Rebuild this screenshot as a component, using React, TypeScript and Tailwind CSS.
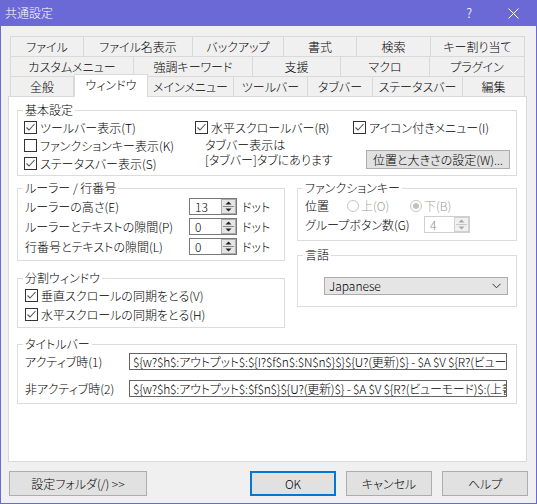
import React from 'react'

type TabDef = { label: string; w: string; active?: boolean }

const ROW1: TabDef[] = [
  { label: 'ファイル', w: 'w-[74px] border-l' },
  { label: 'ファイル名表示', w: 'w-[109px]' },
  { label: 'バックアップ', w: 'w-[91px]' },
  { label: '書式', w: 'w-[73px]' },
  { label: '検索', w: 'w-[74px]' },
  { label: 'キー割り当て', w: 'w-[94px]' },
]
const ROW2: TabDef[] = [
  { label: 'カスタムメニュー', w: 'w-[124px] border-l' },
  { label: '強調キーワード', w: 'w-[119px]' },
  { label: '支援', w: 'w-[88px]' },
  { label: 'マクロ', w: 'w-[89px]' },
  { label: 'プラグイン', w: 'w-[95px]' },
]
const ROW3: TabDef[] = [
  { label: '全般', w: 'w-[64px] border-l' },
  { label: 'ウィンドウ', w: 'w-[74px]', active: true },
  { label: 'メインメニュー', w: 'w-[86px]' },
  { label: 'ツールバー', w: 'w-[74px]' },
  { label: 'タブバー', w: 'w-[65px]' },
  { label: 'ステータスバー', w: 'w-[90px]' },
  { label: '編集', w: 'w-[62px]' },
]

function TabRow({ tabs }: { tabs: TabDef[] }) {
  return (
    <div className="flex h-[20px]">
      {tabs.map(t =>
        t.active ? (
          <div key={t.label}
            className={`${t.w} relative z-10 -mt-[2px] h-[23px] bg-white border-t border-l border-r border-[#d9d9d9] flex items-start justify-center pt-[2px] leading-[16px]`}>
            {t.label}
          </div>
        ) : (
          <div key={t.label}
            className={`${t.w} h-[20px] border-t border-r border-[#d9d9d9] bg-[#f0f0f0] flex items-center justify-center leading-[16px]`}>
            {t.label}
          </div>
        )
      )}
    </div>
  )
}

function Check({ checked, label }: { checked?: boolean; label: string }) {
  return (
    <div className="flex items-center h-[13px] gap-[3px]">
      <span className="w-[13px] h-[13px] shrink-0 border border-[#333333] bg-white flex items-center justify-center">
        {checked && (
          <svg width="11" height="11" viewBox="0 0 11 11">
            <polyline points="1.5,5.5 4,8 9.5,2" fill="none" stroke="#555555" strokeWidth="1.1" />
          </svg>
        )}
      </span>
      <span className="leading-[13px] whitespace-nowrap">{label}</span>
    </div>
  )
}

function Group({ title, className, children }: { title: string; className: string; children?: React.ReactNode }) {
  return (
    <div className={`relative border border-[#dcdcdc] ${className}`}>
      <span className="absolute -top-[8px] left-[5px] bg-white px-[2px] leading-[14px]">{title}</span>
      {children}
    </div>
  )
}

function SpinArrows({ disabled }: { disabled?: boolean }) {
  const c = disabled ? '#a8a8a8' : '#222222'
  return (
    <svg width="15" height="15" viewBox="0 0 15 15" className="shrink-0">
      <rect x="0.5" y="0.5" width="14" height="14" fill={disabled ? '#f0f0f0' : '#e5e5e5'} stroke={disabled ? '#d0d0d0' : '#acacac'} />
      <line x1="2" y1="7.5" x2="13" y2="7.5" stroke={disabled ? '#c8c8c8' : '#8a8a8a'} />
      <polygon points="4.5,5.5 10.5,5.5 7.5,2.5" fill={c} />
      <polygon points="4.5,9.5 10.5,9.5 7.5,12.5" fill={c} />
    </svg>
  )
}

function Spin({ value, disabled, w }: { value: string; disabled?: boolean; w: string }) {
  return (
    <div className={`${w} h-[17px] flex items-center bg-white border ${disabled ? 'border-[#cfcfcf] text-[#8c8c8c]' : 'border-[#7a7a7a]'}`}>
      <span className="flex-1 pl-[5px] leading-[15px]">{value}</span>
      <SpinArrows disabled={disabled} />
    </div>
  )
}

function Radio({ label, checked }: { label: string; checked?: boolean }) {
  return (
    <div className="flex items-center gap-[2px] text-[#a0a0a0]">
      <span className="w-[12px] h-[12px] rounded-full border border-[#c4c4c4] bg-white flex items-center justify-center">
        {checked && <span className="w-[6px] h-[6px] rounded-full bg-[#c0c0c0]" />}
      </span>
      <span className="leading-[14px]">{label}</span>
    </div>
  )
}

function Button({ children, w, primary }: { children: React.ReactNode; w: string; primary?: boolean }) {
  return (
    <div className={`${w} h-[25px] flex items-center justify-center bg-[#e1e1e1] ${primary ? 'border-2 border-[#0078d7]' : 'border border-[#adadad]'}`}>
      {children}
    </div>
  )
}

const ACTIVE_TITLE = '${w?$h$:アウトプット$:${I?$f$n$:$N$n$}$}${U?(更新)$} - $A $V ${R?(ビューモード)$:(上書き)$}'
const INACTIVE_TITLE = '${w?$h$:アウトプット$:$f$n$}${U?(更新)$} - $A $V ${R?(ビューモード)$:(上書き)$}'

export default function App() {
  return (
    <div className="w-[537px] h-[504px] flex flex-col bg-[#f0f0f0] border-l border-r border-b border-[#6b69d6] text-[12px] font-light text-black font-['Noto_Sans_CJK_JP',sans-serif] [font-feature-settings:'palt'] overflow-hidden">
      {/* Title bar */}
      <div className="h-[26px] shrink-0 bg-[#6b69d6] text-white flex items-center pl-[4px]">
        <span className="text-[12px]">共通設定</span>
        <span className="ml-auto mr-[36px] text-[13px]">?</span>
        <svg width="11" height="11" viewBox="0 0 11 11" className="mr-[17px]">
          <line x1="0.5" y1="0.5" x2="10.5" y2="10.5" stroke="white" strokeWidth="1" />
          <line x1="10.5" y1="0.5" x2="0.5" y2="10.5" stroke="white" strokeWidth="1" />
        </svg>
      </div>

      <div className="flex flex-col pl-[7px] pt-[10px]">
        {/* Tabs */}
        <div className="ml-[2px] flex flex-col">
          <TabRow tabs={ROW1} />
          <TabRow tabs={ROW2} />
          <TabRow tabs={ROW3} />
        </div>

        {/* Tab page */}
        <div className="w-[519px] h-[366px] bg-white border border-[#d9d9d9] pt-[13px] pl-[8px] flex flex-col">
          <Group title="基本設定" className="w-[500px] h-[66px] pt-[10px] pl-[6px]">
            <div className="flex">
              <div className="w-[171px] flex flex-col gap-[5px]">
                <Check checked label="ツールバー表示(T)" />
                <Check label="ファンクションキー表示(K)" />
                <Check checked label="ステータスバー表示(S)" />
              </div>
              <div className="flex flex-col">
                <div className="flex">
                  <div className="w-[158px]"><Check checked label="水平スクロールバー(R)" /></div>
                  <Check checked label="アイコン付きメニュー(I)" />
                </div>
                <div className="flex items-start mt-[3px]">
                  <div className="ml-[10px] w-[161px] leading-[15px]">
                    <div>タブバー表示は</div>
                    <div>[タブバー]タブにあります</div>
                  </div>
                  <div className="mt-[13px]">
                    <Button w="w-[144px] !h-[19px]">位置と大きさの設定(W)...</Button>
                  </div>
                </div>
              </div>
            </div>
          </Group>

          <div className="flex gap-[12px] mt-[12px]">
            <div className="w-[268px] flex flex-col">
              <Group title="ルーラー / 行番号" className="h-[73px] pt-[9px] pl-[7px] flex flex-col gap-[3px]">
                {[
                  ['ルーラーの高さ(E)', '13'],
                  ['ルーラーとテキストの隙間(P)', '0'],
                  ['行番号とテキストの隙間(L)', '0'],
                ].map(([l, v]) => (
                  <div key={l} className="flex items-center h-[17px]">
                    <span className="w-[164px] whitespace-nowrap">{l}</span>
                    <Spin value={v} w="w-[48px]" />
                    <span className="ml-[5px]">ドット</span>
                  </div>
                ))}
              </Group>
              <Group title="分割ウィンドウ" className="mt-[17px] h-[50px] pt-[10px] pl-[7px] flex flex-col gap-[6px]">
                <Check checked label="垂直スクロールの同期をとる(V)" />
                <Check checked label="水平スクロールの同期をとる(H)" />
              </Group>
            </div>
            <div className="w-[220px] flex flex-col">
              <Group title="ファンクションキー" className="h-[53px] pt-[9px] pl-[7px] flex flex-col gap-[3px]">
                <div className="flex items-center h-[15px]">
                  <span className="w-[42px]">位置</span>
                  <div className="w-[63px]"><Radio label="上(O)" /></div>
                  <Radio checked label="下(B)" />
                </div>
                <div className="flex items-center h-[17px]">
                  <span className="w-[119px] whitespace-nowrap">グループボタン数(G)</span>
                  <Spin value="4" disabled w="w-[46px]" />
                </div>
              </Group>
              <Group title="言語" className="mt-[14px] h-[52px] pt-[21px] pl-[26px]">
                <div className="w-[184px] h-[18px] bg-[#e5e5e5] border border-[#adadad] flex items-center pl-[4px] pr-[6px]">
                  <span className="flex-1 leading-[14px]">Japanese</span>
                  <svg width="9" height="6" viewBox="0 0 9 6">
                    <polyline points="0.5,0.8 4.5,4.8 8.5,0.8" fill="none" stroke="#333333" strokeWidth="1" />
                  </svg>
                </div>
              </Group>
            </div>
          </div>

          <Group title="タイトルバー" className="mt-[16px] w-[500px] h-[60px] pt-[8px] pl-[7px] flex flex-col gap-[10px]">
            {[
              ['アクティブ時(1)', ACTIVE_TITLE],
              ['非アクティブ時(2)', INACTIVE_TITLE],
            ].map(([l, v]) => (
              <div key={l} className="flex items-center h-[17px]">
                <span className="w-[104px] whitespace-nowrap">{l}</span>
                <div className="w-[378px] h-[17px] border border-[#646464] bg-white overflow-hidden whitespace-nowrap pl-[3px] leading-[15px] tracking-[-0.2px]">
                  {v}
                </div>
              </div>
            ))}
          </Group>
        </div>

        {/* Bottom buttons */}
        <div className="flex items-center mt-[9px] ml-[1px] w-[519px]">
          <Button w="w-[138px]">設定フォルダ(/) &gt;&gt;</Button>
          <div className="ml-auto flex gap-[10px]">
            <Button w="w-[86px]" primary>OK</Button>
            <Button w="w-[86px]">キャンセル</Button>
            <Button w="w-[86px]">ヘルプ</Button>
          </div>
        </div>
      </div>
    </div>
  )
}
